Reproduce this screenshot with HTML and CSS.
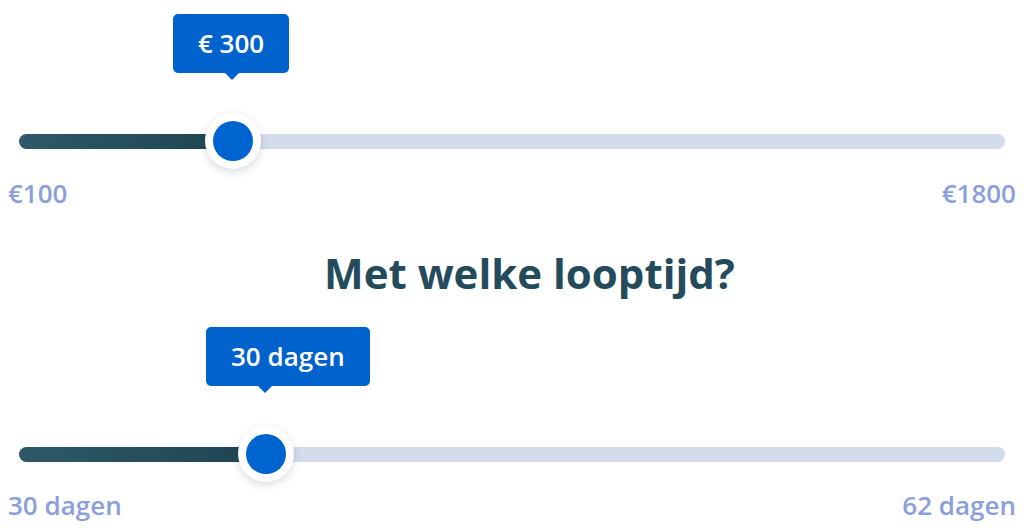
FILE: index.html
```html
<!DOCTYPE html>
<html lang="nl">
<head>
<meta charset="utf-8">
<link rel="stylesheet" href="styles.css">
</head>
<body>
<main class="page">
  <section class="slider slider-amount">
    <div class="track">
      <div class="fill" style="width:21.7%"></div>
      <div class="thumb" style="left:21.7%">
        <div class="tip">€ 300</div>
      </div>
    </div>
    <div class="limits"><span>€100</span><span>€1800</span></div>
  </section>
  <h2 class="title">Met welke looptijd?</h2>
  <section class="slider slider-term">
    <div class="track">
      <div class="fill" style="width:25.05%"></div>
      <div class="thumb" style="left:25.05%">
        <div class="tip">30 dagen</div>
      </div>
    </div>
    <div class="limits limits-term"><span>30 dagen</span><span>62 dagen</span></div>
  </section>
</main>
</body>
</html>
```
FILE: styles.css
```css
html, body {
  margin: 0;
  padding: 0;
  background: #ffffff;
}
body {
  font-family: "Open Sans", "Liberation Sans", sans-serif;
}
.page {
  padding: 0 8px;
  display: flex;
  flex-direction: column;
}
.slider-amount {
  padding-top: 134px;
}
.slider-term {
  padding-top: 146px;
}
.track {
  position: relative;
  height: 15px;
  margin: 0 11px;
  background: #d3dcea;
  border-radius: 8px;
}
.fill {
  height: 100%;
  border-radius: 8px 0 0 8px;
  background: linear-gradient(90deg, #2d5968 0%, #1f4452 100%);
}
.thumb {
  position: absolute;
  top: 50%;
  width: 56px;
  height: 56px;
  margin: -29px 0 0 -28px;
  border-radius: 50%;
  background: #ffffff;
  box-shadow: 0 3px 9px rgba(20, 40, 60, 0.16);
  display: flex;
  align-items: center;
  justify-content: center;
}
.thumb::after {
  content: "";
  width: 40px;
  height: 40px;
  border-radius: 50%;
  background: #0064d0;
}
.tip {
  position: absolute;
  bottom: 96px;
  left: -32px;
  padding: 12px 25px;
  line-height: 35px;
  font-size: 26px;
  font-weight: 600;
  color: #ffffff;
  background: #0062cc;
  border-radius: 5px;
  white-space: nowrap;
}
.tip::after {
  content: "";
  position: absolute;
  top: 100%;
  left: 52px;
  border-left: 7px solid transparent;
  border-right: 7px solid transparent;
  border-top: 7px solid #0062cc;
}
.limits {
  display: flex;
  justify-content: space-between;
  margin-top: 27px;
  font-size: 26px;
  line-height: 34px;
  font-weight: 600;
  color: #8b9fdc;
}
.limits-term {
  margin-top: 26px;
}
.title {
  margin: 35px 0 0;
  padding-left: 35px;
  text-align: center;
  font-size: 42px;
  line-height: 56px;
  font-weight: 700;
  color: #234b5c;
}
```
